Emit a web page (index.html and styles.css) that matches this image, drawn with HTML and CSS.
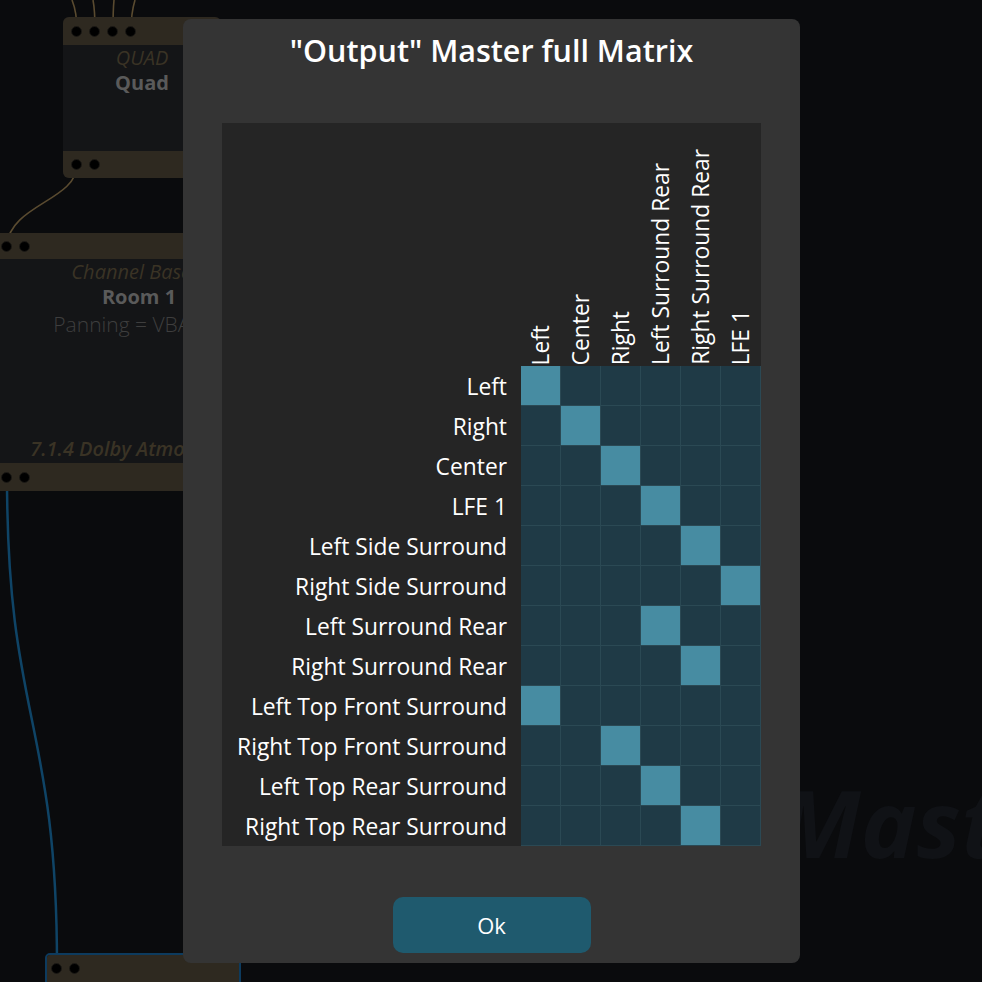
FILE: index.html
```html
<!DOCTYPE html>
<html>
<head>
<meta charset="utf-8">
<link rel="stylesheet" href="styles.css">
</head>
<body>
<div class="canvas">
  <div class="watermark">Master</div>
  <svg class="wires" width="982" height="982" viewBox="0 0 982 982">
    <g fill="none" stroke="#5a4b30" stroke-width="1.6">
      <path d="M72,0 C76,10 77,20 77,31"/>
      <path d="M93,0 C95,10 95,20 95,31"/>
      <path d="M114,0 C113,10 113,20 113,31"/>
      <path d="M135,0 C132,10 131,20 131,31"/>
      <path d="M77,165 C77,200 10,205 7,245"/>
    </g>
    <path d="M7,477 C7,720 57,720 57,966" fill="none" stroke="#0f4466" stroke-width="2.5"/>
  </svg>

  <div class="node node-quad">
    <div class="bar bar-top"><span class="port"></span><span class="port"></span><span class="port"></span><span class="port"></span></div>
    <div class="node-body">
      <div class="node-kind">QUAD</div>
      <div class="node-name">Quad</div>
    </div>
    <div class="bar bar-bottom"><span class="port"></span><span class="port"></span></div>
  </div>

  <div class="node node-room">
    <div class="bar bar-top"><span class="port"></span><span class="port"></span></div>
    <div class="node-body">
      <div class="node-kind">Channel Based</div>
      <div class="node-name">Room 1</div>
      <div class="node-info">Panning = VBAP</div>
      <div class="node-out">7.1.4 Dolby Atmos</div>
    </div>
    <div class="bar bar-bottom"><span class="port"></span><span class="port"></span></div>
  </div>

  <div class="node node-out-sel">
    <div class="bar bar-top"><span class="port"></span><span class="port"></span></div>
  </div>
</div>

<div class="dialog">
  <h1 class="dialog-title">"Output" Master full Matrix</h1>
  <div class="matrix" id="matrix">
    <div class="corner"></div>
  </div>
  <button class="ok-btn">Ok</button>
</div>

<script>
  var cols = ["Left","Center","Right","Left Surround Rear","Right Surround Rear","LFE 1"];
  var rows = ["Left","Right","Center","LFE 1","Left Side Surround","Right Side Surround","Left Surround Rear","Right Surround Rear","Left Top Front Surround","Right Top Front Surround","Left Top Rear Surround","Right Top Rear Surround"];
  var active = [0,1,2,3,4,5,3,4,0,2,3,4];
  var m = document.getElementById("matrix");
  cols.forEach(function(c){
    var h = document.createElement("div");
    h.className = "col-head";
    var s = document.createElement("span");
    s.textContent = c;
    h.appendChild(s);
    m.appendChild(h);
  });
  rows.forEach(function(r, i){
    var l = document.createElement("div");
    l.className = "row-head";
    l.textContent = r;
    m.appendChild(l);
    for (var j = 0; j < cols.length; j++) {
      var c = document.createElement("div");
      c.className = "cell" + (active[i] === j ? " on" : "");
      m.appendChild(c);
    }
  });
</script>
</body>
</html>
```

FILE: styles.css
```css
* { box-sizing: border-box; }
html, body {
  margin: 0;
  padding: 0;
  width: 982px;
  height: 982px;
  overflow: hidden;
  background: #0a0b0d;
  font-family: "Open Sans", "Noto Sans", sans-serif;
}
.canvas {
  position: absolute;
  left: 0; top: 0;
  width: 982px; height: 982px;
  overflow: hidden;
}
.watermark {
  position: absolute;
  left: 778px;
  top: 766px;
  width: 204px;
  overflow: hidden;
  font-size: 94px;
  line-height: 1.2;
  font-style: italic;
  font-weight: 700;
  color: #101216;
  white-space: nowrap;
}
.wires {
  position: absolute;
  left: 0; top: 0;
}
.node {
  position: absolute;
  background: #141517;
  border-radius: 6px;
  overflow: hidden;
  display: flex;
  flex-direction: column;
}
.bar {
  background: #2e2920;
  display: flex;
  align-items: center;
  gap: 8px;
  flex: none;
}
.port {
  width: 11px;
  height: 11px;
  border-radius: 50%;
  background: #000;
  border: 1px solid #1c1a16;
  flex: none;
}
.node-body {
  flex: 1;
  display: flex;
  flex-direction: column;
  align-items: center;
  text-align: center;
  white-space: nowrap;
}
.node-kind {
  font-style: italic;
  color: #3a3325;
  font-size: 20px;
  line-height: 25px;
}
.node-name {
  font-weight: 700;
  color: #5a5a5a;
  font-size: 20px;
  line-height: 25px;
}
.node-info {
  color: #3e3e3e;
  font-size: 21px;
  font-weight: 300;
  line-height: 30px;
  padding-right: 22px;
}
.node-out {
  margin-top: auto;
  font-style: italic;
  font-weight: 600;
  color: #3a3325;
  font-size: 20px;
  line-height: 26px;
  padding-right: 54px;
}
.node-room .node-kind { padding-right: 4px; }
.node-quad {
  left: 63px;
  top: 17px;
  width: 158px;
  height: 161px;
}
.node-quad .bar-top { height: 28px; padding-left: 8px; gap: 7px; }
.node-quad .bar-bottom { height: 27px; padding-left: 8px; gap: 7px; }
.node-room {
  left: -10px;
  top: 233px;
  width: 298px;
  height: 258px;
}
.node-room .bar-top { height: 26px; padding-left: 11px; gap: 7px; }
.node-room .bar-bottom { height: 28px; padding-left: 11px; gap: 7px; }
.node-room .node-body { padding-bottom: 1px; }
.node-out-sel {
  left: 45px;
  top: 953px;
  width: 196px;
  height: 60px;
  border: 2px solid #0d3b5e;
  border-radius: 5px;
}
.node-out-sel .bar-top { height: 27px; padding-left: 4px; gap: 7px; }

.dialog {
  position: absolute;
  left: 183px;
  top: 19px;
  width: 617px;
  height: 944px;
  background: #343434;
  border-radius: 8px;
  display: flex;
  flex-direction: column;
  align-items: center;
}
.dialog-title {
  margin: 11px 0 0;
  height: 40px;
  line-height: 40px;
  font-size: 30.5px;
  font-weight: 600;
  color: #ffffff;
  white-space: nowrap;
}
.matrix {
  margin-top: 53px;
  width: 539px;
  height: 723px;
  background: #252525;
  display: grid;
  grid-template-columns: 299px repeat(6, 40px);
  grid-template-rows: 243px repeat(12, 40px);
  color: #ffffff;
  font-size: 22.8px;
}
.col-head {
  display: flex;
  align-items: flex-end;
  justify-content: center;
  padding-bottom: 1px;
}
.col-head span {
  writing-mode: vertical-rl;
  transform: rotate(180deg);
  white-space: nowrap;
  line-height: 26px;
}
.row-head {
  display: flex;
  align-items: center;
  justify-content: flex-end;
  padding-right: 14px;
  white-space: nowrap;
}
.cell {
  background: #1f3a46;
  border-right: 1px solid #2b4954;
  border-bottom: 1px solid #2b4954;
}
.cell.on {
  background: #478ca2;
}
.ok-btn {
  margin-top: 51px;
  width: 198px;
  height: 56px;
  border: none;
  border-radius: 10px;
  background: #1f5a6e;
  color: #ffffff;
  font-family: "Open Sans", "Noto Sans", sans-serif;
  font-size: 22px;
}
```
